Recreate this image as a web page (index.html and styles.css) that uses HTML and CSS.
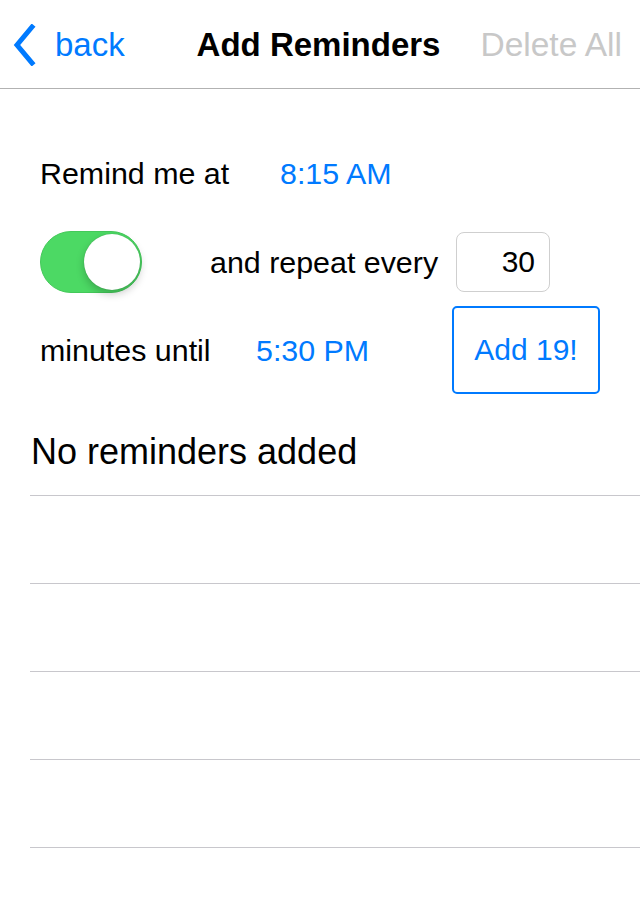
FILE: index.html
```html
<!DOCTYPE html>
<html>
<head>
<meta charset="utf-8">
<link rel="stylesheet" href="styles.css">
</head>
<body>
<div class="screen">
  <header class="nav">
    <div class="nav-left">
      <svg class="chev" width="24" height="42" viewBox="0 0 24 42"><polyline points="19,3 4,21 19,39" fill="none" stroke="#007aff" stroke-width="5" stroke-linecap="square" stroke-linejoin="miter"/></svg>
      <span class="back">back</span>
    </div>
    <div class="nav-title">Add Reminders</div>
    <div class="nav-right">Delete All</div>
  </header>
  <main class="form">
    <div class="row row1">
      <span class="label w240">Remind me at</span>
      <span class="link">8:15 AM</span>
    </div>
    <div class="row row2">
      <div class="toggle"><div class="thumb"></div></div>
      <span class="label repeat">and repeat every</span>
      <div class="field">30</div>
    </div>
    <div class="row row3">
      <span class="label w216">minutes until</span>
      <span class="link">5:30 PM</span>
      <div class="btn">Add 19!</div>
    </div>
  </main>
  <section class="list">
    <div class="list-head">No reminders added</div>
    <div class="cell"></div>
    <div class="cell"></div>
    <div class="cell"></div>
    <div class="cell"></div>
    <div class="cell"></div>
  </section>
</div>
</body>
</html>
```
FILE: styles.css
```css
* { box-sizing: border-box; }
html, body { margin: 0; padding: 0; background: #fff; }
body { font-family: "Liberation Sans", Arial, sans-serif; color: #000; }
.screen { width: 640px; height: 920px; overflow: hidden; }

.nav {
  height: 89px;
  border-bottom: 1px solid #b2b2b2;
  display: flex;
  align-items: center;
  position: relative;
  padding: 2px 18px 0 13px;
  white-space: nowrap;
}
.nav-left { display: flex; align-items: center; gap: 18px; width: 170px; color: #007aff; font-size: 33px; }
.chev { display: block; margin-top: -1px; }
.back { line-height: 40px; }
.nav-title { flex: 1; text-align: center; font-weight: bold; font-size: 33px; margin-left: 2px; }
.nav-right { font-size: 33.5px; color: #c8c8c8; width: 170px; text-align: right; }

.form { padding: 62px 40px 0 40px; }
.row { display: flex; align-items: center; white-space: nowrap; }
.label, .link { font-size: 30.4px; line-height: 44px; flex: none; }
.link { color: #007aff; }
.row1 { height: 44px; }
.w240 { width: 240px; }
.w216 { width: 216px; }
.row2 { height: 64px; margin-top: 35px; }
.row3 { height: 88px; margin-top: 12px; }

.toggle {
  flex: none;
  width: 102px; height: 62px; border-radius: 31px;
  background: #4cd964;
  border: 1px solid #44c95a;
  position: relative;
}
.thumb {
  position: absolute; right: 1px; top: 2px;
  width: 56px; height: 56px; border-radius: 50%;
  background: #fff;
  box-shadow: 0 4px 8px rgba(0,0,0,0.22), 0 0 1px rgba(0,0,0,0.25);
}
.repeat { margin-left: 68px; width: 228px; }
.field {
  flex: none;
  margin-left: 18px;
  width: 94px; height: 60px;
  border: 1px solid #cfcfcf; border-radius: 8px;
  font-size: 30px; line-height: 58px;
  text-align: right; padding-right: 14px;
}
.btn {
  flex: none;
  margin-left: auto;
  width: 148px; height: 88px;
  border: 2px solid #007aff; border-radius: 5px;
  color: #007aff; font-size: 30px;
  display: flex; align-items: center; justify-content: center;
}

.list-head {
  font-size: 36px; line-height: 44px;
  padding: 36px 0 21px 31px;
}
.cell {
  margin-left: 30px;
  height: 88px;
  border-top: 1px solid #c8c7cc;
}
```
